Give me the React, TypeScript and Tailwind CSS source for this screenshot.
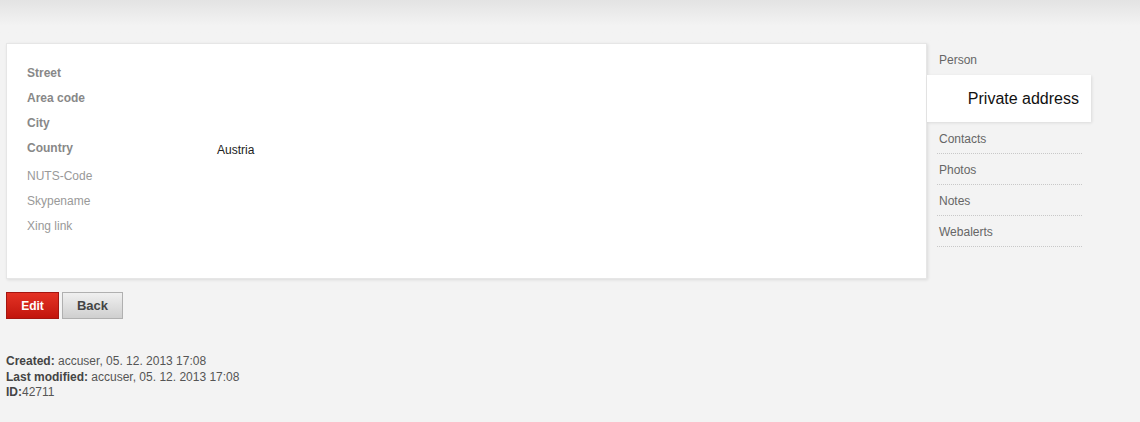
import React from "react";

const fields = [
  { label: "Street", bold: true, value: "" },
  { label: "Area code", bold: true, value: "" },
  { label: "City", bold: true, value: "" },
  { label: "Country", bold: true, value: "Austria" },
  { label: "NUTS-Code", bold: false, value: "" },
  { label: "Skypename", bold: false, value: "" },
  { label: "Xing link", bold: false, value: "" },
];

const navItems = ["Contacts", "Photos", "Notes", "Webalerts"];

export default function App() {
  return (
    <div
      className="min-h-[422px] w-full bg-[#f3f3f3] text-[12px] text-[#333]"
      style={{ fontFamily: '"Liberation Sans", Arial, sans-serif' }}
    >
      {/* top shade */}
      <div className="h-[43px] bg-gradient-to-b from-[#e3e3e3] to-[#f3f3f3] to-[60%]" />

      <div className="flex pl-[6px]">
        {/* detail card */}
        <div className="w-[921px] h-[236px] bg-white border border-[#e6e6e6] shadow-[1px_1px_3px_rgba(0,0,0,0.1)] pl-[20px] pt-[16px]">
          {fields.map((f) =>
            f.value ? (
              <div key={f.label} className="flex items-start h-[28px] pt-[4px]">
                <span className="w-[190px] font-bold text-[#888]">{f.label}</span>
                <span className="pt-[2px] text-[#222]">{f.value}</span>
              </div>
            ) : (
              <div key={f.label} className="flex items-center h-[25px]">
                <span
                  className={`w-[190px] ${f.bold ? "font-bold text-[#888]" : "text-[#999]"}`}
                >
                  {f.label}
                </span>
              </div>
            )
          )}
        </div>

        {/* side nav */}
        <div className="flex flex-col w-[164px]">
          <div className="ml-[10px] w-[145px] h-[32px] pl-[2px] pt-[8px] text-[#666]">
            Person
          </div>
          <div className="h-[47px] w-[164px] bg-white shadow-[1px_1px_3px_rgba(0,0,0,0.1)] flex items-center justify-end pr-[12px] text-[16px] text-[#111]">
            Private address
          </div>
          <div className="mt-[1px] flex flex-col">
            {navItems.map((n) => (
              <div
                key={n}
                className="ml-[10px] w-[145px] h-[31px] pl-[2px] pt-[2px] flex items-center border-b border-dotted border-[#c8c8c8] text-[#666]"
              >
                {n}
              </div>
            ))}
          </div>
        </div>
      </div>

      {/* buttons */}
      <div className="flex gap-[3px] pl-[6px] mt-[13px]">
        <button className="w-[53px] h-[27px] border border-[#a51510] bg-gradient-to-b from-[#e43224] to-[#c2140c] text-white font-bold text-[12px]">
          Edit
        </button>
        <button className="w-[61px] h-[27px] border border-[#b0b0b0] bg-gradient-to-b from-[#f0f0f0] to-[#cfcfcf] text-[#444] font-bold text-[13px]">
          Back
        </button>
      </div>

      {/* meta */}
      <div className="pl-[6px] mt-[35px] leading-[15.5px] text-[#555]">
        <div>
          <b className="text-[#444]">Created:</b> accuser, 05. 12. 2013 17:08
        </div>
        <div>
          <b className="text-[#444]">Last modified:</b> accuser, 05. 12. 2013 17:08
        </div>
        <div>
          <b className="text-[#444]">ID:</b>42711
        </div>
      </div>
    </div>
  );
}
